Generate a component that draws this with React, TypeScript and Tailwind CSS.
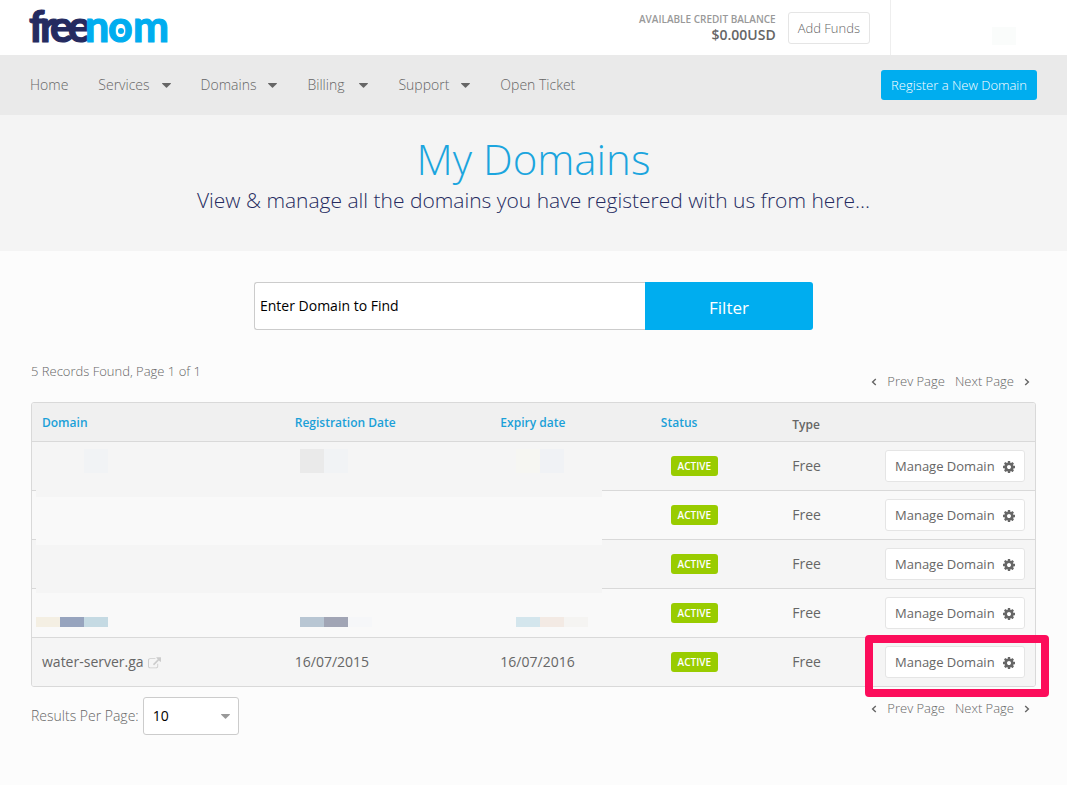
import { useState } from "react";

const navItems = [
  { label: "Home", hasMenu: false },
  { label: "Services", hasMenu: true },
  { label: "Domains", hasMenu: true },
  { label: "Billing", hasMenu: true },
  { label: "Support", hasMenu: true },
  { label: "Open Ticket", hasMenu: false },
];

const domains = [
  { name: "", registered: "", expires: "" },
  { name: "", registered: "", expires: "" },
  { name: "", registered: "", expires: "" },
  { name: "", registered: "", expires: "" },
  { name: "water-server.ga", registered: "16/07/2015", expires: "16/07/2016" },
];

function Logo() {
  return (
    <svg className="overflow-visible" width="148" height="55" viewBox="0 0 148 55" role="img" aria-label="freenom" fontFamily="Lato, sans-serif" fontWeight="700" fontSize="43" strokeWidth="1.2">
      <text y="42" fill="#252b60" stroke="#252b60">
        <tspan x="1">f</tspan>
        <tspan x="12">r</tspan>
        <tspan x="22">e</tspan>
        <tspan x="40">e</tspan>
      </text>
      <text y="42" fill="#00adef" stroke="#00adef">
        <tspan x="57">n</tspan>
        <tspan x="80">o</tspan>
        <tspan x="105">m</tspan>
      </text>
      <circle cx="93" cy="31" r="3" fill="#00adef" />
    </svg>
  );
}

function Caret({ className = "" }: { className?: string }) {
  return (
    <svg className={className} width="9" height="5" viewBox="0 0 9 5" fill="currentColor" aria-hidden="true">
      <path d="M0.5 0h8q.8 0 .3.7L5 4.6q-.5.5-1 0L.2.7Q-.3 0 .5 0z" />
    </svg>
  );
}

function GearIcon() {
  return (
    <svg width="12" height="12" viewBox="0 128 1536 1536" fill="currentColor" aria-hidden="true">
      <path d="M1024 896q0-106-75-181t-181-75-181 75-75 181 75 181 181 75 181-75 75-181zm512-109v222q0 12-8 23t-20 13l-185 28q-19 54-39 91 35 50 107 138 10 12 10 25t-9 23q-27 37-99 108t-94 71q-12 0-26-9l-138-108q-44 23-91 38-16 136-29 186-7 28-36 28h-222q-14 0-24.5-8.5t-11.5-21.5l-28-184q-49-16-90-37l-141 107q-10 9-25 9-14 0-25-11-126-114-165-168-7-10-7-23 0-12 8-23 15-21 51-66.5t54-70.5q-27-50-41-99l-183-27q-13-2-21-12.5t-8-23.5v-222q0-12 8-23t19-13l186-28q14-46 39-92-40-57-107-138-10-12-10-24 0-10 9-23 26-36 98.5-107.5t94.5-71.5q13 0 26 10l138 107q44-23 91-38 16-136 29-186 7-28 36-28h222q14 0 24.5 8.5t11.5 21.5l28 184q49 16 90 37l142-107q9-9 24-9 13 0 25 10 129 119 165 170 7 8 7 22 0 12-8 23-15 21-51 66.5t-54 70.5q26 50 41 98l183 28q13 2 21 12.5t8 23.5z" />
    </svg>
  );
}

function ExternalLinkIcon() {
  return (
    <svg width="13" height="12" viewBox="0 0 1792 1600" fill="currentColor" aria-hidden="true">
      <path d="M1408 928v320q0 119-84.5 203.5t-203.5 84.5h-832q-119 0-203.5-84.5t-84.5-203.5v-832q0-119 84.5-203.5t203.5-84.5h704q14 0 23 9t9 23v64q0 14-9 23t-23 9h-704q-66 0-113 47t-47 113v832q0 66 47 113t113 47h832q66 0 113-47t47-113v-320q0-14 9-23t23-9h64q14 0 23 9t9 23zm384-864v512q0 26-19 45t-45 19-45-19l-176-176-652 652q-10 10-23 10t-23-10l-114-114q-10-10-10-23t10-23l652-652-176-176q-19-19-19-45t19-45 45-19h512q26 0 45 19t19 45z" />
    </svg>
  );
}

function Chevron({ direction }: { direction: "left" | "right" }) {
  return (
    <svg className="mt-[2px]" width="6" height="8" viewBox="0 0 6 8" fill="none" stroke="currentColor" strokeWidth="1.4" aria-hidden="true">
      <path d={direction === "left" ? "M4.8 1L1.6 4L4.8 7" : "M1.2 1L4.4 4L1.2 7"} />
    </svg>
  );
}

function Pager() {
  return (
    <nav className="flex gap-[10px] pr-[6px] text-[13px] leading-[18px] font-light" aria-label="Pages">
      <a href="#prev" className="flex items-center gap-[10px]">
        <Chevron direction="left" />
        Prev Page
      </a>
      <a href="#next" className="flex items-center gap-[10px]">
        Next Page
        <Chevron direction="right" />
      </a>
    </nav>
  );
}

// Pixelated cover over the private rows
function PrivacyMask() {
  return (
    <div className="absolute top-[47px] left-[5px] w-[566px]" aria-hidden="true">
      <div className="h-12 bg-[#f5f5f5]" />
      <div className="h-12 bg-[#f9f9f9]" />
      <div className="h-12 bg-[#f5f5f5]" />
      <div className="h-11 bg-[#f9f9f9]" />
      <div className="absolute top-0 left-12 h-6 w-6 bg-[#f1f3f5]" />
      <div className="absolute top-0 left-66 flex h-6">
        <div className="w-6 bg-[#eaeaea]" />
        <div className="w-6 bg-[#f1f3f5]" />
      </div>
      <div className="absolute top-0 left-120 flex h-6">
        <div className="w-6 bg-[#f6f6f2]" />
        <div className="w-6 bg-[#f0f2f5]" />
      </div>
      <div className="absolute top-42 left-0 flex h-[10px]">
        <div className="w-6 bg-[#f4efe3]" />
        <div className="w-6 bg-[#97a4be]" />
        <div className="w-6 bg-[#c5dae3]" />
      </div>
      <div className="absolute top-42 left-66 flex h-[10px]">
        <div className="w-6 bg-[#b8c6d3]" />
        <div className="w-6 bg-[#a1a5b5]" />
        <div className="w-6 bg-[#f6f7f9]" />
      </div>
      <div className="absolute top-42 left-120 flex h-[10px]">
        <div className="w-6 bg-[#d4e6ed]" />
        <div className="w-6 bg-[#f3eae4]" />
        <div className="w-6 bg-[#f5f4f2]" />
      </div>
    </div>
  );
}

export default function App() {
  const [query, setQuery] = useState("");
  const [perPage, setPerPage] = useState("10");

  return (
    <div className="min-h-screen bg-[#fcfcfc] font-['Open_Sans',sans-serif] text-[#666]">
      {/* Top bar */}
      <header className="flex h-[55px] items-stretch justify-between bg-white pl-7">
        <a href="#home">
          <Logo />
        </a>
        <div className="flex">
          <div className="mr-3 flex flex-col items-end pt-3 font-semibold">
            <span className="text-[10px] leading-[15px] text-[#999]">AVAILABLE CREDIT BALANCE</span>
            <span className="text-sm leading-4">$0.00USD</span>
          </div>
          <div className="pt-3 pr-5">
            <button type="button" className="h-8 rounded-[3px] border border-[#e5e5e5] bg-white px-[9px] pt-[2px] text-[13px] font-light">
              Add Funds
            </button>
          </div>
          <div className="flex w-[177px] justify-end border-l border-[#eee] pt-[27px] pr-[51px]">
            <div className="h-[18px] w-6 bg-[#fafcfb]" />
          </div>
        </div>
      </header>

      {/* Main menu */}
      <div className="flex h-15 items-center justify-between bg-[#eaeaea] px-[30px]">
        <nav className="flex gap-[30px] text-sm font-light">
          {navItems.map((item) =>
            item.hasMenu ? (
              <a key={item.label} href="#menu" className="flex items-center gap-3">
                <span className="min-w-10">{item.label}</span>
                <Caret />
              </a>
            ) : (
              <a key={item.label} href="#menu">{item.label}</a>
            )
          )}
        </nav>
        <button type="button" className="h-[30px] rounded-[3px] bg-[#00adef] px-[10px] pt-[2px] text-[13px] font-light text-white">
          Register a New Domain
        </button>
      </div>

      {/* Page title */}
      <section className="h-34 bg-[#f4f4f4] pt-5 text-center font-light">
        <h1 className="mb-[2px] text-[42px] leading-[48px] text-[#1ba5de]">My Domains</h1>
        <p className="text-[21px] leading-[30px] text-[#252b60]">
          View &amp; manage all the domains you have registered with us from here...
        </p>
      </section>

      <main className="px-[31px] pt-[31px] pb-12">
        <form className="mx-auto flex h-12 max-w-[559px]" onSubmit={(e) => e.preventDefault()}>
          <input
            type="text"
            aria-label="Enter Domain to Find"
            placeholder="Enter Domain to Find"
            value={query}
            onChange={(e) => setQuery(e.target.value)}
            className="min-w-0 flex-1 rounded-l-[3px] border border-r-0 border-[#ccc] bg-white px-[5px] text-sm text-black outline-none placeholder:text-black"
          />
          <button type="submit" className="w-42 rounded-r-[3px] bg-[#00adef] pt-1 text-[17px] text-white">
            Filter
          </button>
        </form>

        <div className="flex items-start justify-between pt-8 pb-3">
          <p className="text-[13px] leading-[18px] font-light">5 Records Found, Page 1 of 1</p>
          <div className="pt-[10px]">
            <Pager />
          </div>
        </div>

        <div className="relative">
          <div className="overflow-hidden rounded-[3px] border border-[#d9d9d9]">
            <table className="w-full table-fixed text-left">
              <colgroup>
                <col className="w-[25.2%]" />
                <col className="w-[20.5%]" />
                <col className="w-[16%]" />
                <col className="w-[13.1%]" />
                <col className="w-[8%]" />
                <col />
              </colgroup>
              <thead>
                <tr className="h-[38px] border-b border-[#d9d9d9] bg-[#f0f0f0] text-xs text-[#1ba0d8]">
                  <th className="px-[10px] pt-[2px] font-semibold"><a href="#sort">Domain</a></th>
                  <th className="px-[10px] pt-[2px] font-semibold"><a href="#sort">Registration Date</a></th>
                  <th className="px-[10px] pt-[2px] font-semibold"><a href="#sort">Expiry date</a></th>
                  <th className="px-[10px] pt-[2px] font-semibold"><a href="#sort">Status</a></th>
                  <th className="px-[10px] pt-[6px] font-semibold text-[#666]">Type</th>
                  <th aria-label="Actions" />
                </tr>
              </thead>
              <tbody className="text-sm">
                {domains.map((domain, index) => (
                  <tr key={index} className="h-[49px] border-b border-[#d9d9d9] odd:bg-[#f5f5f5] even:bg-[#f9f9f9] last:border-b-0">
                    <td className="px-[10px]">
                      {domain.name && (
                        <a href="#domain" className="flex items-center gap-1">
                          {domain.name}
                          <span className="pt-[2px] text-[#ccc]"><ExternalLinkIcon /></span>
                        </a>
                      )}
                    </td>
                    <td className="px-[10px]">{domain.registered}</td>
                    <td className="px-[10px]">{domain.expires}</td>
                    <td className="px-5">
                      <span className="flex h-5 w-[47px] items-center justify-center rounded-[3px] bg-[#99cc00] pt-px text-[10px] font-semibold text-white">
                        ACTIVE
                      </span>
                    </td>
                    <td className="px-[10px]">Free</td>
                    <td className="pr-[10px]">
                      <button type="button" className="ml-auto flex h-8 w-35 items-center justify-between rounded-[3px] border border-[#e5e5e5] bg-white px-[9px] pt-px text-[13px]">
                        Manage Domain
                        <span className="pt-px"><GearIcon /></span>
                      </button>
                    </td>
                  </tr>
                ))}
              </tbody>
            </table>
          </div>
          <PrivacyMask />
          <div className="pointer-events-none absolute -right-[13px] -bottom-[10px] h-[62px] w-46 rounded-[4px] border-8 border-[#fc0d5b]" />
        </div>

        <div className="flex items-start justify-between pt-[10px]">
          <div className="flex items-center gap-1 text-sm">
            <label htmlFor="per-page" className="font-light">Results Per Page:</label>
            <div className="relative">
              <select
                id="per-page"
                value={perPage}
                onChange={(e) => setPerPage(e.target.value)}
                className="h-[38px] w-24 appearance-none rounded-[3px] border border-[#ccc] bg-white px-[9px] text-black"
              >
                <option value="10">10</option>
                <option value="25">25</option>
                <option value="50">50</option>
                <option value="100">100</option>
              </select>
              <Caret className="pointer-events-none absolute top-[17px] right-[9px] text-[#999]" />
            </div>
          </div>
          <div className="pt-[2px]">
            <Pager />
          </div>
        </div>
      </main>
    </div>
  );
}
